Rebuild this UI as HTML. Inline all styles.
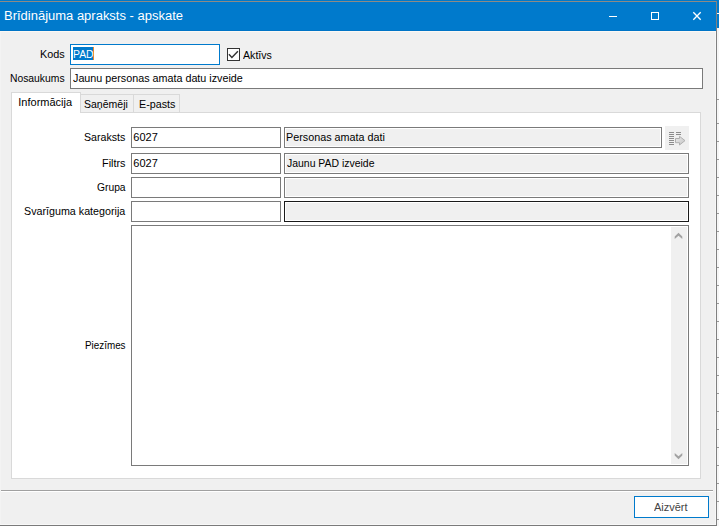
<!DOCTYPE html>
<html lang="lv">
<head>
<meta charset="utf-8">
<title>Brīdinājuma apraksts - apskate</title>
<style>
html,body{margin:0;padding:0;}
body{width:719px;height:526px;overflow:hidden;background:#f0f0f0;position:relative;font-family:"Liberation Sans","DejaVu Sans",sans-serif;font-size:11px;color:#000;}
*{box-sizing:border-box;}
.abs{position:absolute;}
.tx{position:absolute;white-space:nowrap;line-height:16px;transform-origin:0 0;display:block;}
.inp{position:absolute;height:21px;border:1px solid #7a7a7a;background:#fff;}
.ro{background:#f0f0f0;box-shadow:inset 0 0 0 1px #fff;}
.tab{position:absolute;top:94px;height:19px;border:1px solid #d9d9d9;background:#f0f0f0;}
.tab.act{top:92px;height:21px;background:#fff;border-bottom:none;}
</style>
</head>
<body>
<!-- background window strip on the right -->
<div class="abs" style="left:717px;top:0;width:2px;height:526px;background:#f6f6f6"></div>
<div class="abs" style="left:0;top:0;width:719px;height:1px;background:#007acc"></div>
<div class="abs" style="left:717px;top:0;width:2px;height:28px;background:#007acc"></div>
<div class="abs" style="left:717px;top:13px;width:2px;height:1px;background:#fff"></div>
<div class="abs" style="left:717px;top:99px;width:2px;height:1px;background:#999"></div><div class="abs" style="left:717px;top:123px;width:2px;height:1px;background:#999"></div><div class="abs" style="left:717px;top:141px;width:2px;height:1px;background:#999"></div><div class="abs" style="left:717px;top:159px;width:2px;height:1px;background:#999"></div><div class="abs" style="left:717px;top:177px;width:2px;height:1px;background:#999"></div><div class="abs" style="left:717px;top:195px;width:2px;height:1px;background:#999"></div><div class="abs" style="left:717px;top:213px;width:2px;height:1px;background:#999"></div><div class="abs" style="left:717px;top:231px;width:2px;height:1px;background:#999"></div><div class="abs" style="left:717px;top:249px;width:2px;height:1px;background:#999"></div><div class="abs" style="left:717px;top:267px;width:2px;height:1px;background:#999"></div><div class="abs" style="left:717px;top:285px;width:2px;height:1px;background:#999"></div><div class="abs" style="left:717px;top:303px;width:2px;height:1px;background:#999"></div><div class="abs" style="left:717px;top:321px;width:2px;height:1px;background:#999"></div><div class="abs" style="left:717px;top:339px;width:2px;height:1px;background:#999"></div><div class="abs" style="left:717px;top:357px;width:2px;height:1px;background:#999"></div><div class="abs" style="left:717px;top:375px;width:2px;height:1px;background:#999"></div><div class="abs" style="left:717px;top:393px;width:2px;height:1px;background:#999"></div><div class="abs" style="left:717px;top:411px;width:2px;height:1px;background:#999"></div><div class="abs" style="left:717px;top:429px;width:2px;height:1px;background:#999"></div><div class="abs" style="left:717px;top:447px;width:2px;height:1px;background:#999"></div><div class="abs" style="left:717px;top:465px;width:2px;height:1px;background:#999"></div><div class="abs" style="left:717px;top:483px;width:2px;height:1px;background:#999"></div><div class="abs" style="left:717px;top:501px;width:2px;height:1px;background:#999"></div><div class="abs" style="left:717px;top:519px;width:2px;height:1px;background:#999"></div>
<!-- window frame -->
<div class="abs" style="left:0;top:1px;width:717px;height:525px;background:#f0f0f0;border-top:1px solid #8e8a85;border-right:1px solid #808080;border-bottom:1px solid #7a7a7a"></div>
<div class="abs" style="left:715px;top:31px;width:1px;height:494px;background:#f7f7f7"></div>
<div class="abs" style="left:0;top:524px;width:716px;height:1px;background:#f8f8f8"></div>
<div class="abs" style="left:0;top:31px;width:1px;height:493px;background:#f3f3f3"></div>
<!-- title bar -->
<div class="abs" style="left:0;top:2px;width:716px;height:29px;background:#007acc">
 <svg class="abs" style="left:0;top:0" width="716" height="29" viewBox="0 0 716 29">
  <rect x="609" y="14" width="8" height="1" fill="#fff"/>
  <rect x="651.5" y="10.5" width="7" height="7" fill="none" stroke="#fff" stroke-width="1"/>
  <path d="M693.3 10.3 L700.7 17.7 M700.7 10.3 L693.3 17.7" stroke="#fff" stroke-width="1.35" fill="none"/>
 </svg>
</div>

<div class="abs" style="left:0;top:30px;width:716px;height:1px;background:#0074c6"></div>
<div class="abs" style="left:0;top:31px;width:716px;height:1px;background:#fbf8f4"></div>

<!-- Kods -->
<div class="inp" style="left:70px;top:44px;width:150px;border-color:#007acc"></div>
<div class="abs" style="left:73px;top:47px;width:21px;height:13px;background:#007acc"></div>
<div class="abs" style="left:93px;top:47px;width:1px;height:13px;background:#e8862e"></div>
<div class="abs" style="left:227px;top:48px;width:13px;height:13px;border:1px solid #333;background:#fff">
 <svg class="abs" style="left:0;top:0" width="11" height="11" viewBox="0 0 11 11"><path d="M0.9 5.3 L3.9 8.4 L9.9 2.2" stroke="#333" stroke-width="1.45" fill="none"/></svg>
</div>
<!-- Nosaukums -->
<div class="inp" style="left:70px;top:68px;width:633px"></div>

<!-- tab panel -->
<div class="abs" style="left:11px;top:112px;width:690px;height:367px;background:#fff;border:1px solid #d9d9d9"></div>
<div class="tab" style="left:80px;width:54px"></div>
<div class="tab" style="left:133px;width:47px"></div>
<div class="tab act" style="left:11px;width:70px"></div>

<!-- rows -->
<div class="inp" style="left:131px;top:127px;width:150px"></div>
<div class="inp ro" style="left:284px;top:127px;width:378px"></div>
<div class="abs" style="left:665px;top:126px;width:24px;height:24px;background:#f0f0f0">
 <svg class="abs" style="left:0;top:0" width="24" height="24" viewBox="0 0 24 24">
  <g fill="#8c8c8c">
   <rect x="4" y="6" width="5" height="1"/><rect x="4" y="8" width="5" height="1"/><rect x="4" y="10" width="5" height="1"/><rect x="4" y="12" width="5" height="1"/><rect x="4" y="14" width="5" height="1"/><rect x="4" y="16" width="5" height="1"/><rect x="4" y="18" width="5" height="1"/>
   <rect x="11" y="6" width="5" height="1"/><rect x="11" y="8" width="5" height="1"/>
  </g>
  <defs><linearGradient id="ag" x1="0" y1="0" x2="1" y2="1"><stop offset="0" stop-color="#ececec"/><stop offset="1" stop-color="#c4c4c4"/></linearGradient></defs>
  <path d="M10.5 12.5 H14.5 V10.3 L20 14.6 L14.5 19 V16.7 H10.5 Z" fill="url(#ag)" stroke="#b0b0b0" stroke-width="1"/>
 </svg>
</div>
<div class="inp" style="left:131px;top:153px;width:150px"></div>
<div class="inp ro" style="left:284px;top:153px;width:405px"></div>
<div class="inp" style="left:131px;top:177px;width:150px"></div>
<div class="inp ro" style="left:284px;top:177px;width:405px"></div>
<div class="inp" style="left:131px;top:201px;width:150px"></div>
<div class="inp ro" style="left:284px;top:201px;width:405px;border-color:#1a1a1a"></div>

<!-- notes -->
<div class="abs" style="left:131px;top:225px;width:558px;height:241px;border:1px solid #7a7a7a;background:#fff">
 <div class="abs" style="left:539px;top:1px;width:16px;height:237px;background:#f0f0f0">
  <svg class="abs" style="left:0;top:0" width="16" height="237" viewBox="0 0 16 237">
   <polygon points="7.5,5.7 11.3,9.4 11.3,12 7.5,8.7 3.7,12 3.7,9.4" fill="#a2a2a2"/>
   <polygon points="3.7,225.9 3.7,228.5 7.5,232.2 11.3,228.5 11.3,225.9 7.5,229.2" fill="#a2a2a2"/>
  </svg>
 </div>
</div>

<!-- bottom -->
<div class="abs" style="left:1px;top:490px;width:712px;height:1px;background:#a0a0a0"></div>
<div class="abs" style="left:1px;top:491px;width:712px;height:1px;background:#fff"></div>
<div class="abs" style="left:634px;top:496px;width:75px;height:22px;border:1px solid #007acc;background:#fff"></div>

<!-- texts -->
<span class="tx" style="left:4.29px;top:8px;font-size:12px;color:#fff;transform:scaleX(1.0820);">Brīdinājuma apraksts - apskate</span>
<span class="tx" style="left:40.20px;top:46px;font-size:11px;color:#000;transform:scaleX(0.9843);">Kods</span>
<span class="tx" style="left:72.72px;top:46px;font-size:11px;color:#fff;transform:scaleX(0.9451);">PAD</span>
<span class="tx" style="left:242.66px;top:47px;font-size:11px;color:#000;transform:scaleX(0.9642);">Aktīvs</span>
<span class="tx" style="left:10.36px;top:70px;font-size:11px;color:#000;transform:scaleX(0.9392);">Nosaukums</span>
<span class="tx" style="left:72.72px;top:70px;font-size:11px;color:#000;transform:scaleX(0.9777);">Jaunu personas amata datu izveide</span>
<span class="tx" style="left:18.30px;top:94px;font-size:11px;color:#000;transform:scaleX(1.0000);">Informācija</span>
<span class="tx" style="left:84.20px;top:96px;font-size:11px;color:#000;transform:scaleX(0.9557);">Saņēmēji</span>
<span class="tx" style="left:139.04px;top:96px;font-size:11px;color:#000;transform:scaleX(0.9760);">E-pasts</span>
<span class="tx" style="left:84.16px;top:129px;font-size:11px;color:#000;transform:scaleX(0.9664);">Saraksts</span>
<span class="tx" style="left:133.30px;top:129px;font-size:11px;color:#000;transform:scaleX(1.0000);">6027</span>
<span class="tx" style="left:286.43px;top:129px;font-size:11px;color:#000;transform:scaleX(0.9806);">Personas amata dati</span>
<span class="tx" style="left:102.00px;top:155px;font-size:11px;color:#000;transform:scaleX(0.9868);">Filtrs</span>
<span class="tx" style="left:133.30px;top:155px;font-size:11px;color:#000;transform:scaleX(1.0000);">6027</span>
<span class="tx" style="left:286.71px;top:155px;font-size:11px;color:#000;transform:scaleX(0.9497);">Jaunu PAD izveide</span>
<span class="tx" style="left:96.75px;top:179px;font-size:11px;color:#000;transform:scaleX(0.9342);">Grupa</span>
<span class="tx" style="left:24.35px;top:203px;font-size:11px;color:#000;transform:scaleX(0.9741);">Svarīguma kategorija</span>
<span class="tx" style="left:85.42px;top:337px;font-size:11px;color:#000;transform:scaleX(0.8965);">Piezīmes</span>
<span class="tx" style="left:653.52px;top:499px;font-size:11px;color:#444;transform:scaleX(0.9970);">Aizvērt</span>
</body>
</html>
